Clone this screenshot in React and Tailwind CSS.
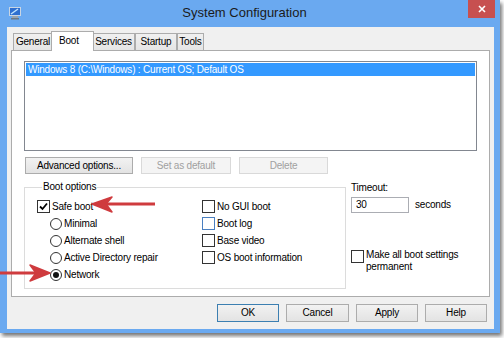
import React from 'react'

function Check({ checked, focus }) {
  return (
    <span
      className={`w-[13px] h-[13px] shrink-0 bg-white border flex items-center justify-center ${
        focus ? 'border-[#4a7fc0]' : 'border-[#333]'
      }`}
    >
      {checked && (
        <svg width="9" height="9" viewBox="0 0 9 9">
          <path d="M1 4.5 L3.5 7 L8 1.5" fill="none" stroke="#000" strokeWidth="1.8" />
        </svg>
      )}
    </span>
  )
}

function Radio({ checked }) {
  return (
    <span className="w-[12px] h-[12px] shrink-0 rounded-full bg-white border border-[#333] flex items-center justify-center">
      {checked && <span className="w-[6px] h-[6px] rounded-full bg-[#111]" />}
    </span>
  )
}

function Btn({ children, disabled, primary, className = '' }) {
  return (
    <div
      className={`h-full flex items-center justify-center border ${
        disabled
          ? 'border-[#d9d9d9] bg-[#f4f4f4] text-[#a0a0a0]'
          : primary
          ? 'border-[#3c7fb1] bg-gradient-to-b from-[#f2f2f2] to-[#e3e3e3] text-black'
          : 'border-[#acacac] bg-gradient-to-b from-[#f2f2f2] to-[#e3e3e3] text-black'
      } ${className}`}
    >
      {children}
    </div>
  )
}

function Tab({ label, active, className = '' }) {
  return active ? (
    <div className={`h-[20px] -mb-px z-10 -mx-[2px] pl-[7px] pt-[2px] bg-white border border-b-0 border-[#acacac] ${className}`}>
      {label}
    </div>
  ) : (
    <div
      className={`h-[17px] flex items-center justify-center border border-b-0 border-[#acacac] bg-gradient-to-b from-[#f0f0f0] to-[#e5e5e5] ${className}`}
    >
      {label}
    </div>
  )
}

export default function App() {
  return (
    <div className="w-[504px] h-[338px] bg-white relative overflow-hidden font-['Liberation_Sans','Arial',sans-serif] text-[10px] leading-[14px] tracking-[-0.2px] text-black">
      <div className="w-[500px] h-[333px] bg-[#6aa9f0] flex flex-col shadow-[2px_3px_4px_rgba(0,0,0,0.55)]">
        {/* Title bar */}
        <div className="h-[27px] flex items-start relative">
          <svg className="ml-[9px] mt-[7px]" width="12" height="13" viewBox="0 0 12 13">
            <rect x="0.5" y="0.5" width="11" height="8" fill="#2f6fd0" stroke="#c9d5e3" />
            <path d="M2 7 L9 2" stroke="#bfe3ff" strokeWidth="1.5" />
            <rect x="3" y="9" width="6" height="2" fill="#9aa3ad" />
            <rect x="2" y="11" width="8" height="1.5" fill="#6d7884" />
          </svg>
          <div className="flex-1 text-center pt-[5px] text-[13px] leading-[16px] tracking-normal text-[#1b1b1b]">
            System Configuration
          </div>
          <div className="w-[27px] h-[18px] mr-[5px] bg-[#c75050] flex items-center justify-center">
            <svg width="8" height="8" viewBox="0 0 8 8">
              <path d="M1 1 L7 7 M7 1 L1 7" stroke="#fff" strokeWidth="1.6" />
            </svg>
          </div>
        </div>

        {/* Client area */}
        <div className="ml-[7px] mr-[6px] mb-[4px] flex-1 bg-[#f0f0f0] flex flex-col">
          {/* Tabs */}
          <div className="flex items-end pl-[6px] pt-[4px] h-[23px]">
            <Tab label="General" className="w-[40px]" />
            <Tab label="Boot" active className="w-[43px]" />
            <Tab label="Services" className="w-[43px]" />
            <Tab label="Startup" className="w-[42px]" />
            <Tab label="Tools" className="w-[27px]" />
          </div>

          {/* Tab page */}
          <div className="mx-[4px] h-[247px] bg-white border border-[#acacac] px-[12px] pt-[10px] flex flex-col">
            <div className="h-[90px] border border-[#828790] bg-white p-[1px]">
              <div className="h-[13px] bg-[#3399ff] text-white pl-[2px] leading-[13px]">
                Windows 8 (C:\Windows) : Current OS; Default OS
              </div>
            </div>

            <div className="flex h-[17px] mt-[6px] gap-[8px] pl-[1px]">
              <Btn className="w-[108px]">Advanced options...</Btn>
              <Btn disabled className="w-[90px]">Set as default</Btn>
              <Btn disabled className="w-[89px]">Delete</Btn>
            </div>

            <div className="flex mt-[5px]">
              <fieldset className="w-[322px] h-[110px] border border-[#dcdcdc] pl-[12px]">
                <legend className="ml-[5px] px-[1px] leading-[16px]">Boot options</legend>
                <div className="flex mt-[3px]">
                  <div className="w-[165px] flex flex-col">
                    <div className="h-[17px] flex items-center gap-[2px]">
                      <Check checked />
                      <span>Safe boot</span>
                    </div>
                    {['Minimal', 'Alternate shell', 'Active Directory repair', 'Network'].map((t) => (
                      <div key={t} className="h-[17px] flex items-center gap-[2px] pl-[13px]">
                        <Radio checked={t === 'Network'} />
                        <span>{t}</span>
                      </div>
                    ))}
                  </div>
                  <div className="flex flex-col">
                    {['No GUI boot', 'Boot log', 'Base video', 'OS boot information'].map((t) => (
                      <div key={t} className="h-[17px] flex items-center gap-[2px]">
                        <Check focus={t === 'Boot log'} />
                        <span>{t}</span>
                      </div>
                    ))}
                  </div>
                </div>
              </fieldset>

              <div className="ml-[5px] pt-[1px] flex flex-col">
                <div className="leading-[16px]">Timeout:</div>
                <div className="flex items-center mt-[1px]">
                  <div className="w-[58px] h-[16px] border border-[#abadb3] bg-white pl-[4px] leading-[14px]">30</div>
                  <span className="ml-[6px]">seconds</span>
                </div>
                <div className="flex items-start gap-[2px] mt-[37px]">
                  <Check />
                  <div className="leading-[12px] -mt-[1px]">
                    Make all boot settings
                    <br />
                    permanent
                  </div>
                </div>
              </div>
            </div>
          </div>

          {/* Dialog buttons */}
          <div className="flex justify-end gap-[7px] h-[18px] mt-[7px] pr-[7px]">
            <Btn primary className="w-[62px]">OK</Btn>
            <Btn className="w-[63px]">Cancel</Btn>
            <Btn className="w-[62px]">Apply</Btn>
            <Btn className="w-[62px]">Help</Btn>
          </div>
        </div>
      </div>

      {/* Red annotation arrows */}
      <svg className="absolute left-0 top-0 pointer-events-none" width="504" height="338" viewBox="0 0 504 338">
        <g fill="#cf3b3e" stroke="#cf3b3e" strokeLinejoin="round">
          <path d="M155 204 L106 204" strokeWidth="3" fill="none" />
          <path d="M92 204 L112 197 L106 204 L112 212 Z" strokeWidth="1.5" />
          <path d="M0 273 L38 273" strokeWidth="3" fill="none" />
          <path d="M50 273 L30 265 L36 273 L30 281 Z" strokeWidth="1.5" />
        </g>
      </svg>
    </div>
  )
}
